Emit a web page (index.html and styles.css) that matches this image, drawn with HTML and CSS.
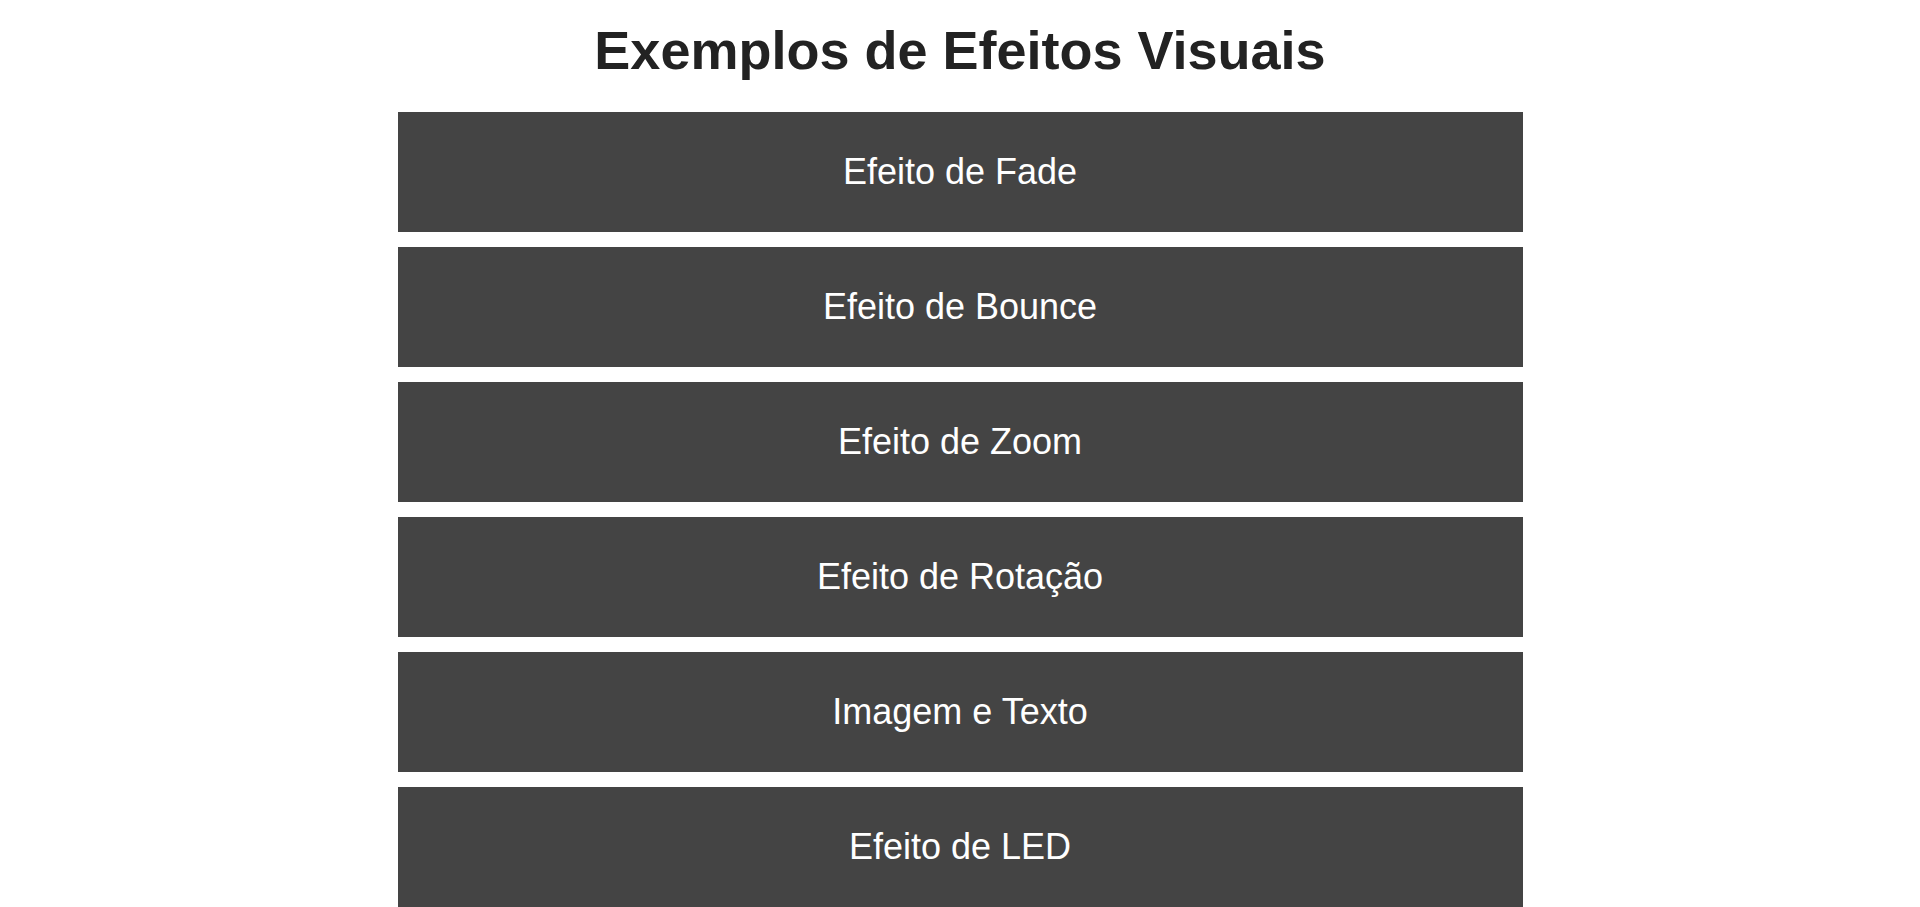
FILE: index.html
```html
<!DOCTYPE html>
<html lang="pt">
<head>
<meta charset="utf-8">
<title>Exemplos de Efeitos Visuais</title>
<link rel="stylesheet" href="styles.css">
</head>
<body>
<h1 class="title">Exemplos de Efeitos Visuais</h1>
<div class="list">
  <div class="item">Efeito de Fade</div>
  <div class="item">Efeito de Bounce</div>
  <div class="item">Efeito de Zoom</div>
  <div class="item">Efeito de Rotação</div>
  <div class="item">Imagem e Texto</div>
  <div class="item">Efeito de LED</div>
</div>
</body>
</html>
```

FILE: styles.css
```css
html, body {
  margin: 0;
  padding: 0;
  background: #ffffff;
}
body {
  font-family: "Liberation Sans", Arial, sans-serif;
}
.title {
  margin: 0;
  padding: 19px 0 0;
  height: 112px;
  box-sizing: border-box;
  font-size: 54px;
  font-weight: bold;
  color: #222222;
  text-align: center;
  line-height: 62px;
}
.list {
  width: 1125px;
  margin: 0 auto;
  display: flex;
  flex-direction: column;
  gap: 15px;
}
.item {
  height: 120px;
  background: #444444;
  color: #ffffff;
  font-size: 36px;
  display: flex;
  align-items: center;
  justify-content: center;
}
```
